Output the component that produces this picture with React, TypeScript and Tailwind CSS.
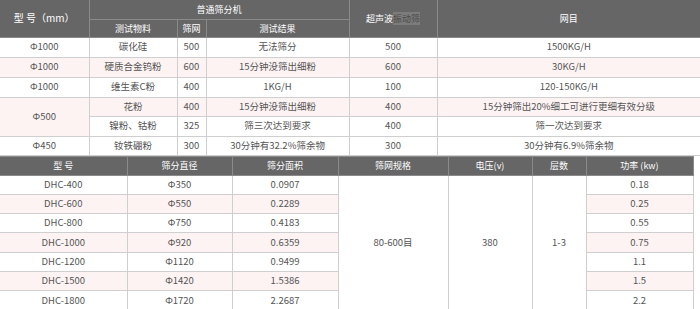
import React from 'react';

const td = 'border border-[#cfcfcf] text-center align-middle p-0';
const th = 'border border-[#8a8a8a] text-center align-middle p-0 font-normal text-white text-[9px]';
const pink = 'bg-[#fdf3f3]';

const App: React.FC = () => {
  const power = ['0.18', '0.25', '0.55', '0.75', '1.1', '1.5', '2.2'];
  const rows2 = [
    ['DHC-400', 'Φ350', '0.0907'],
    ['DHC-600', 'Φ550', '0.2289'],
    ['DHC-800', 'Φ750', '0.4183'],
    ['DHC-1000', 'Φ920', '0.6359'],
    ['DHC-1200', 'Φ1120', '0.9499'],
    ['DHC-1500', 'Φ1420', '1.5386'],
    ['DHC-1800', 'Φ1720', '2.2687'],
  ];

  return (
    <div className="w-[700px] h-[309px] overflow-hidden bg-white text-[9.5px] leading-none text-[#555] font-['Noto_Sans_CJK_SC','Noto_Sans',sans-serif]">
      {/* 普通 vs 超声波 */}
      <table className="w-[700px] table-fixed border-collapse">
        <colgroup>
          <col className="w-[89px]" />
          <col className="w-[88px]" />
          <col className="w-[29px]" />
          <col className="w-[143px]" />
          <col className="w-[88px]" />
          <col className="w-[263px]" />
        </colgroup>
        <thead className="bg-[#666666]">
          <tr className="h-[19px]">
            <th rowSpan={2} className={`${th} border-t-0 border-l-0 !text-[10px]`}>型 号（mm）</th>
            <th colSpan={3} className={`${th} border-t-0`}>普通筛分机</th>
            <th rowSpan={2} className={`${th} border-t-0`}>
              超声波<span className="bg-[#7c7c7c] text-[#4a4a4a]">振动筛</span>
            </th>
            <th rowSpan={2} className={`${th} border-t-0 border-r-0`}>网目</th>
          </tr>
          <tr className="h-[18px]">
            <th className={th}>测试物料</th>
            <th className={th}>筛网</th>
            <th className={th}>测试结果</th>
          </tr>
        </thead>
        <tbody>
          <tr className="h-[20px]">
            <td className={`${td} border-l-0`}>Φ1000</td>
            <td className={td}>碳化硅</td>
            <td className={td}>500</td>
            <td className={td}>无法筛分</td>
            <td className={td}>500</td>
            <td className={`${td} border-r-0`}>1500KG/H</td>
          </tr>
          <tr className={`h-[20px] ${pink}`}>
            <td className={`${td} border-l-0`}>Φ1000</td>
            <td className={td}>硬质合金钨粉</td>
            <td className={td}>600</td>
            <td className={td}>15分钟没筛出细粉</td>
            <td className={td}>600</td>
            <td className={`${td} border-r-0`}>30KG/H</td>
          </tr>
          <tr className="h-[20px]">
            <td className={`${td} border-l-0`}>Φ1000</td>
            <td className={td}>维生素C粉</td>
            <td className={td}>400</td>
            <td className={td}>1KG/H</td>
            <td className={td}>100</td>
            <td className={`${td} border-r-0`}>120-150KG/H</td>
          </tr>
          <tr className={`h-[19px] ${pink}`}>
            <td rowSpan={2} className={`${td} border-l-0`}>Φ500</td>
            <td className={td}>花粉</td>
            <td className={td}>400</td>
            <td className={td}>15分钟没筛出细粉</td>
            <td className={td}>400</td>
            <td className={`${td} border-r-0`}>15分钟筛出20%细工可进行更细有效分级</td>
          </tr>
          <tr className="h-[20px]">
            <td className={td}>镍粉、钴粉</td>
            <td className={td}>325</td>
            <td className={td}>筛三次达到要求</td>
            <td className={td}>400</td>
            <td className={`${td} border-r-0`}>筛一次达到要求</td>
          </tr>
          <tr className="h-[19px]">
            <td className={`${td} border-l-0`}>Φ450</td>
            <td className={td}>钕铁硼粉</td>
            <td className={td}>300</td>
            <td className={td}>30分钟有32.2%筛余物</td>
            <td className={td}>300</td>
            <td className={`${td} border-r-0`}>30分钟有6.9%筛余物</td>
          </tr>
        </tbody>
      </table>

      {/* DHC 参数 */}
      <table className="w-[693px] table-fixed border-collapse">
        <colgroup>
          <col className="w-[127px]" />
          <col className="w-[105px]" />
          <col className="w-[106px]" />
          <col className="w-[110px]" />
          <col className="w-[84px]" />
          <col className="w-[54px]" />
          <col className="w-[107px]" />
        </colgroup>
        <thead className="bg-[#666666]">
          <tr className="h-[19px]">
            <th className={`${th} border-l-0`}>型 号</th>
            <th className={th}>筛分直径</th>
            <th className={th}>筛分面积</th>
            <th className={th}>筛网规格</th>
            <th className={th}>电压(v)</th>
            <th className={th}>层数</th>
            <th className={th}>功率 (kw)</th>
          </tr>
        </thead>
        <tbody>
          {rows2.map((r, i) => (
            <tr key={r[0]} className={`h-[19.3px] ${i % 2 === 1 ? pink : ''}`}>
              <td className={`${td} border-l-0`}>{r[0]}</td>
              <td className={td}>{r[1]}</td>
              <td className={td}>{r[2]}</td>
              {i === 0 && (
                <>
                  <td rowSpan={7} className={`${td} bg-white`}>80-600目</td>
                  <td rowSpan={7} className={`${td} bg-white`}>380</td>
                  <td rowSpan={7} className={`${td} bg-white`}>1-3</td>
                </>
              )}
              <td className={td}>{power[i]}</td>
            </tr>
          ))}
        </tbody>
      </table>
    </div>
  );
};

export default App;
